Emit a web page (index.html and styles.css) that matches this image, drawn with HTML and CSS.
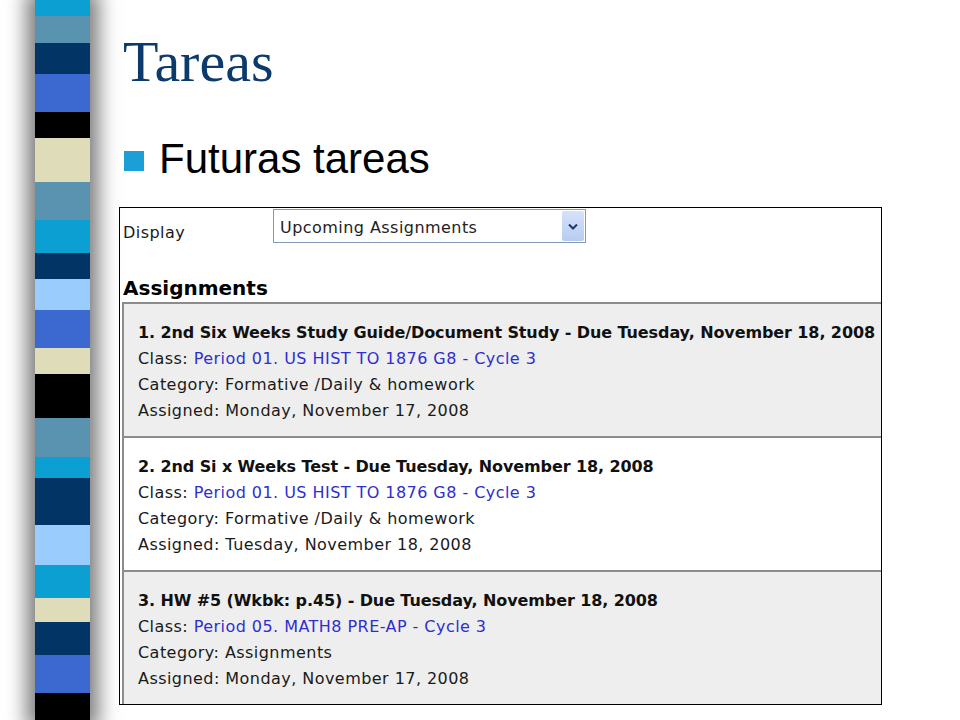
FILE: index.html
```html
<!DOCTYPE html>
<html>
<head>
    <title>Tareas</title>
    <link rel="stylesheet" href="styles.css">
</head>
<body>
<div class="slide">
    <div class="ribbon-col">
        <div class="ribbon">
            <div class="band cyan"></div>
            <div class="band steel"></div>
            <div class="band navy"></div>
            <div class="band royal"></div>
            <div class="band black"></div>
            <div class="band beige"></div>
            <div class="band steel"></div>
            <div class="band cyan"></div>
            <div class="band navy"></div>
            <div class="band light"></div>
            <div class="band royal"></div>
            <div class="band beige"></div>
            <div class="band black"></div>
            <div class="band steel"></div>
            <div class="band cyan"></div>
            <div class="band navy"></div>
            <div class="band light"></div>
            <div class="band cyan"></div>
            <div class="band beige"></div>
            <div class="band navy"></div>
            <div class="band royal"></div>
            <div class="band black"></div>
        </div>
    </div>

    <div class="content">
        <h1 class="title">Tareas</h1>
        <div class="bullet">
            <span class="square"></span>
            <span>Futuras tareas</span>
        </div>

        <div class="shot">
            <div class="display-row">
                <span class="label">Display</span>
                <div class="select">
                    <span class="select-text">Upcoming Assignments</span>
                    <span class="arrow">
                        <svg width="10" height="7" viewBox="0 0 10 7">
                            <path d="M1 1.5 L5 5.5 L9 1.5" fill="none" stroke="#1d3a6b" stroke-width="2"/>
                        </svg>
                    </span>
                </div>
            </div>
            <h2 class="heading">Assignments</h2>
            <div class="list">
                <div class="item shaded">
                    <div class="item-title">1. 2nd Six Weeks Study Guide/Document Study - Due Tuesday, November 18, 2008</div>
                    <div>Class: <span class="link">Period 01. US HIST TO 1876 G8 - Cycle 3</span></div>
                    <div>Category: Formative /Daily &amp; homework</div>
                    <div>Assigned: Monday, November 17, 2008</div>
                </div>
                <div class="item">
                    <div class="item-title">2. 2nd Si x Weeks Test - Due Tuesday, November 18, 2008</div>
                    <div>Class: <span class="link">Period 01. US HIST TO 1876 G8 - Cycle 3</span></div>
                    <div>Category: Formative /Daily &amp; homework</div>
                    <div>Assigned: Tuesday, November 18, 2008</div>
                </div>
                <div class="item shaded">
                    <div class="item-title">3. HW #5 (Wkbk: p.45) - Due Tuesday, November 18, 2008</div>
                    <div>Class: <span class="link">Period 05. MATH8 PRE-AP - Cycle 3</span></div>
                    <div>Category: Assignments</div>
                    <div>Assigned: Monday, November 17, 2008</div>
                </div>
            </div>
        </div>
    </div>
</div>
</body>
</html>
```

FILE: styles.css
```css
body {
    margin: 0;
    padding: 0;
    background-color: #fff;
}

.slide {
    display: flex;
    height: 720px;
    overflow: hidden;
}

/* striped ribbon on the left */
.ribbon-col {
    width: 119px;
    flex-shrink: 0;
}

.ribbon {
    display: flex;
    flex-direction: column;
    width: 55px;
    height: 720px;
    margin-left: 35px;
    box-shadow: 0 0 18px 9px rgba(0, 0, 0, 0.5);
}

.band { flex-shrink: 0; }
.cyan { background-color: #0b9fd2; }
.steel { background-color: #5a93b0; }
.navy { background-color: #033466; }
.royal { background-color: #3b69cf; }
.black { background-color: #000; }
.beige { background-color: #dfdcb9; }
.light { background-color: #9accfd; }

.band:nth-child(1) { height: 16px; }
.band:nth-child(2) { height: 27px; }
.band:nth-child(3) { height: 31px; }
.band:nth-child(4) { height: 38px; }
.band:nth-child(5) { height: 26px; }
.band:nth-child(6) { height: 44px; }
.band:nth-child(7) { height: 38px; }
.band:nth-child(8) { height: 33px; }
.band:nth-child(9) { height: 26px; }
.band:nth-child(10) { height: 31px; }
.band:nth-child(11) { height: 38px; }
.band:nth-child(12) { height: 26px; }
.band:nth-child(13) { height: 44px; }
.band:nth-child(14) { height: 39px; }
.band:nth-child(15) { height: 21px; }
.band:nth-child(16) { height: 47px; }
.band:nth-child(17) { height: 40px; }
.band:nth-child(18) { height: 33px; }
.band:nth-child(19) { height: 24px; }
.band:nth-child(20) { height: 33px; }
.band:nth-child(21) { height: 38px; }
.band:nth-child(22) { height: 27px; }

/* slide text */
.content {
    flex: 1;
    padding-top: 33px;
}

.title {
    margin: 0 0 0 4px;
    font-family: 'Liberation Serif', serif;
    font-weight: normal;
    font-size: 58px;
    line-height: 58px;
    color: #0c3a6c;
}

.bullet {
    display: flex;
    gap: 15px;
    margin-top: 44px;
    padding-left: 5px;
    font-family: 'Liberation Sans', Arial, sans-serif;
    font-size: 42px;
    line-height: 48px;
    color: #000;
}

.square {
    width: 20px;
    height: 20px;
    margin-top: 16px;
    background-color: #1c9ed6;
}

/* the screenshot box */
.shot {
    box-sizing: border-box;
    width: 763px;
    margin-top: 24px;
    border: 1px solid #000;
    font-family: 'DejaVu Sans', Verdana, sans-serif;
    font-size: 16px;
    color: #1a1a1a;
}

.display-row {
    display: flex;
    align-items: flex-start;
    margin-top: 1px;
}

.label {
    box-sizing: border-box;
    width: 153px;
    padding-left: 3px;
    margin-top: 14px;
    line-height: 20px;
    letter-spacing: 0.45px;
}

.select {
    box-sizing: border-box;
    display: flex;
    align-items: center;
    width: 313px;
    height: 34px;
    border: 1px solid #7f9db9;
    background-color: #fff;
}

.select-text {
    flex: 1;
    padding: 3px 0 0 6px;
    line-height: 20px;
    letter-spacing: 0.45px;
    color: #222;
}

.arrow {
    display: flex;
    align-items: center;
    justify-content: center;
    width: 22px;
    height: 30px;
    margin-right: 1px;
    border-radius: 2px;
    background: linear-gradient(#d6e2fa, #b7cbf2);
}

.heading {
    margin: 33px 0 2px 0;
    padding-left: 3px;
    font-size: 20px;
    line-height: 24px;
    font-weight: bold;
    color: #000;
}

.list {
    margin-left: 2px;
    border-top: 2px solid #8c8c8c;
    border-left: 2px solid #8c8c8c;
}

.item {
    padding: 16px 0 12px 14px;
    line-height: 26px;
    letter-spacing: 0.45px;
    white-space: nowrap;
    border-bottom: 2px solid #8c8c8c;
}

.item:last-child {
    border-bottom: none;
}

.shaded {
    background-color: #eeeeee;
}

.item-title {
    font-weight: bold;
    letter-spacing: -0.1px;
    color: #111;
}

.link {
    color: #2e2ed0;
}
```
